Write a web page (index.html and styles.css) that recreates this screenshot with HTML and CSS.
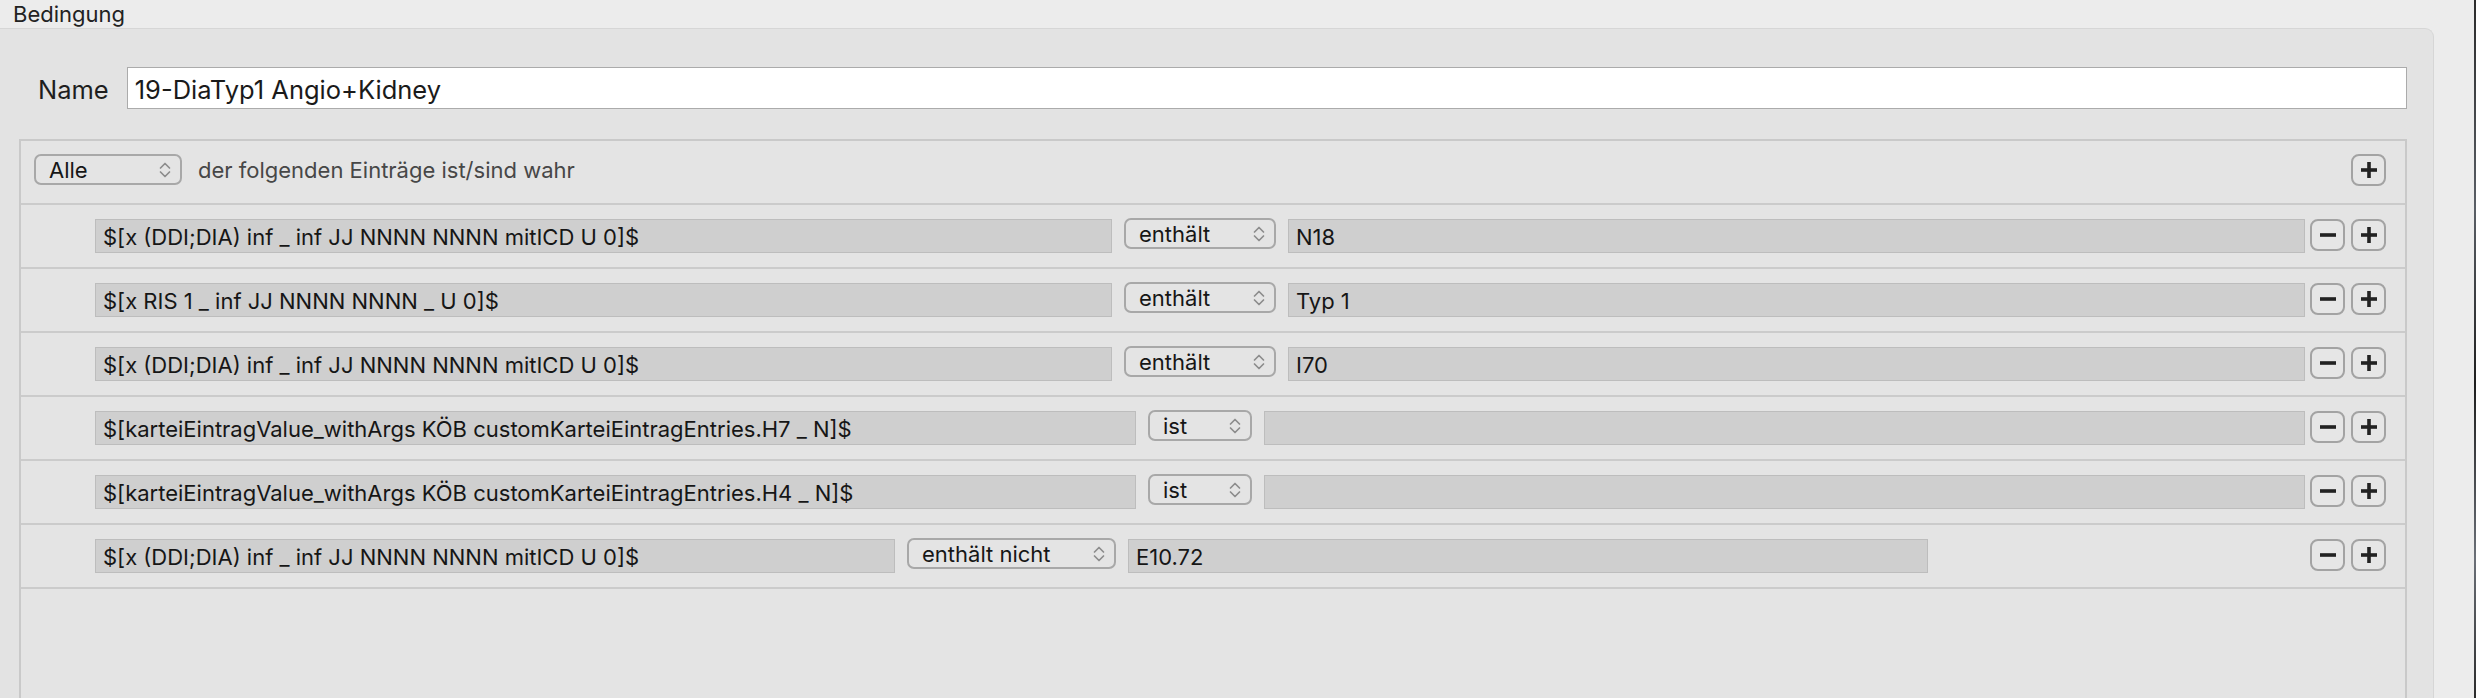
FILE: index.html
```html
<!DOCTYPE html>
<html lang="de">
<head>
  <meta charset="UTF-8" />
  <title>Bedingung</title>
  <link rel="stylesheet" href="styles.css">
</head>
<body>
  <div class="window">
    <div class="main">
      <div class="titlebar">Bedingung</div>

      <div class="panel">
        <div class="name-row">
          <label class="name-label">Name</label>
          <div class="name-input">19-DiaTyp1 Angio+Kidney</div>
        </div>

        <div class="rules">
          <div class="rules-head">
            <div class="popup popup-all">
              <span>Alle</span>
              <svg class="chev" width="14" height="20" viewBox="0 0 14 20"><polyline points="2.5,8 7,3.5 11.5,8" /><polyline points="2.5,12 7,16.5 11.5,12" /></svg>
            </div>
            <span class="head-text">der folgenden Einträge ist/sind wahr</span>
            <div class="btns">
              <button class="btn"><svg width="18" height="18" viewBox="0 0 18 18"><rect x="1" y="7.2" width="16" height="3.6" /><rect x="7.2" y="1" width="3.6" height="16" /></svg></button>
            </div>
          </div>

          <div class="rule">
            <div class="cond">
              <div class="field">$[x (DDI;DIA) inf _ inf JJ NNNN NNNN mitICD U 0]$</div>
              <div class="popup op-contains"><span>enthält</span><svg class="chev" width="14" height="20" viewBox="0 0 14 20"><polyline points="2.5,8 7,3.5 11.5,8" /><polyline points="2.5,12 7,16.5 11.5,12" /></svg></div>
              <div class="field">N18</div>
            </div>
            <div class="btns">
              <button class="btn"><svg width="18" height="18" viewBox="0 0 18 18"><rect x="1" y="7.2" width="16" height="3.6" /></svg></button>
              <button class="btn"><svg width="18" height="18" viewBox="0 0 18 18"><rect x="1" y="7.2" width="16" height="3.6" /><rect x="7.2" y="1" width="3.6" height="16" /></svg></button>
            </div>
          </div>

          <div class="rule">
            <div class="cond">
              <div class="field">$[x RIS 1 _ inf JJ NNNN NNNN _ U 0]$</div>
              <div class="popup op-contains"><span>enthält</span><svg class="chev" width="14" height="20" viewBox="0 0 14 20"><polyline points="2.5,8 7,3.5 11.5,8" /><polyline points="2.5,12 7,16.5 11.5,12" /></svg></div>
              <div class="field">Typ 1</div>
            </div>
            <div class="btns">
              <button class="btn"><svg width="18" height="18" viewBox="0 0 18 18"><rect x="1" y="7.2" width="16" height="3.6" /></svg></button>
              <button class="btn"><svg width="18" height="18" viewBox="0 0 18 18"><rect x="1" y="7.2" width="16" height="3.6" /><rect x="7.2" y="1" width="3.6" height="16" /></svg></button>
            </div>
          </div>

          <div class="rule">
            <div class="cond">
              <div class="field">$[x (DDI;DIA) inf _ inf JJ NNNN NNNN mitICD U 0]$</div>
              <div class="popup op-contains"><span>enthält</span><svg class="chev" width="14" height="20" viewBox="0 0 14 20"><polyline points="2.5,8 7,3.5 11.5,8" /><polyline points="2.5,12 7,16.5 11.5,12" /></svg></div>
              <div class="field">I70</div>
            </div>
            <div class="btns">
              <button class="btn"><svg width="18" height="18" viewBox="0 0 18 18"><rect x="1" y="7.2" width="16" height="3.6" /></svg></button>
              <button class="btn"><svg width="18" height="18" viewBox="0 0 18 18"><rect x="1" y="7.2" width="16" height="3.6" /><rect x="7.2" y="1" width="3.6" height="16" /></svg></button>
            </div>
          </div>

          <div class="rule">
            <div class="cond">
              <div class="field">$[karteiEintragValue_withArgs KÖB customKarteiEintragEntries.H7 _ N]$</div>
              <div class="popup op-is"><span>ist</span><svg class="chev" width="14" height="20" viewBox="0 0 14 20"><polyline points="2.5,8 7,3.5 11.5,8" /><polyline points="2.5,12 7,16.5 11.5,12" /></svg></div>
              <div class="field"></div>
            </div>
            <div class="btns">
              <button class="btn"><svg width="18" height="18" viewBox="0 0 18 18"><rect x="1" y="7.2" width="16" height="3.6" /></svg></button>
              <button class="btn"><svg width="18" height="18" viewBox="0 0 18 18"><rect x="1" y="7.2" width="16" height="3.6" /><rect x="7.2" y="1" width="3.6" height="16" /></svg></button>
            </div>
          </div>

          <div class="rule">
            <div class="cond">
              <div class="field">$[karteiEintragValue_withArgs KÖB customKarteiEintragEntries.H4 _ N]$</div>
              <div class="popup op-is"><span>ist</span><svg class="chev" width="14" height="20" viewBox="0 0 14 20"><polyline points="2.5,8 7,3.5 11.5,8" /><polyline points="2.5,12 7,16.5 11.5,12" /></svg></div>
              <div class="field"></div>
            </div>
            <div class="btns">
              <button class="btn"><svg width="18" height="18" viewBox="0 0 18 18"><rect x="1" y="7.2" width="16" height="3.6" /></svg></button>
              <button class="btn"><svg width="18" height="18" viewBox="0 0 18 18"><rect x="1" y="7.2" width="16" height="3.6" /><rect x="7.2" y="1" width="3.6" height="16" /></svg></button>
            </div>
          </div>

          <div class="rule">
            <div class="cond cond-short">
              <div class="field">$[x (DDI;DIA) inf _ inf JJ NNNN NNNN mitICD U 0]$</div>
              <div class="popup op-not"><span>enthält nicht</span><svg class="chev" width="14" height="20" viewBox="0 0 14 20"><polyline points="2.5,8 7,3.5 11.5,8" /><polyline points="2.5,12 7,16.5 11.5,12" /></svg></div>
              <div class="field">E10.72</div>
            </div>
            <div class="btns">
              <button class="btn"><svg width="18" height="18" viewBox="0 0 18 18"><rect x="1" y="7.2" width="16" height="3.6" /></svg></button>
              <button class="btn"><svg width="18" height="18" viewBox="0 0 18 18"><rect x="1" y="7.2" width="16" height="3.6" /><rect x="7.2" y="1" width="3.6" height="16" /></svg></button>
            </div>
          </div>
        </div>
      </div>
    </div>
    <div class="edge"></div>
  </div>
</body>
</html>
```

FILE: styles.css
```css
* {
  box-sizing: border-box;
}

body {
  margin: 0;
  width: 2476px;
  height: 698px;
  overflow: hidden;
  background-color: #ececec;
  font-family: Inter, "Liberation Sans", sans-serif;
  color: #1e1e1e;
}

.window {
  display: flex;
  height: 698px;
}

.main {
  flex: 1;
  display: flex;
  flex-direction: column;
}

.edge {
  width: 2px;
  background: linear-gradient(#2b2b2b, #5a5f66 30%, #1e1e1e 55%, #6b7078 80%, #2b2b2b);
}

.titlebar {
  height: 28px;
  line-height: 28px;
  padding-left: 13px;
  font-size: 22px;
  color: #222;
}

.panel {
  flex: 1;
  width: 2434px;
  display: flex;
  flex-direction: column;
  padding: 38px 26px 0 0;
  background-color: #e3e3e3;
  border-top: 1px solid #d6d6d6;
  border-right: 1px solid #d6d6d6;
  border-top-right-radius: 9px;
}

/* name line */
.name-row {
  display: flex;
  align-items: center;
  gap: 18px;
  padding-left: 38px;
}

.name-label {
  font-size: 25.5px;
  color: #1e1e1e;
  padding-top: 2px;
}

.name-input {
  flex: 1;
  height: 42px;
  line-height: 40px;
  padding: 2px 0 0 7px;
  font-size: 25.5px;
  color: #1a1a1a;
  background-color: #fff;
  border: 1px solid #ababab;
}

/* rules box */
.rules {
  flex: 1;
  margin: 30px 0 0 19px;
  border: 2px solid #c9c9c9;
  border-bottom: none;
  background-color: #e4e4e4;
}

.rules-head {
  display: flex;
  align-items: flex-start;
  height: 64px;
  padding: 13px 19px 0 13px;
  border-bottom: 2px solid #cbcbcb;
}

.head-text {
  margin-left: 16px;
  height: 31px;
  line-height: 33px;
  font-size: 22px;
  color: #474747;
}

.rule {
  display: flex;
  align-items: flex-start;
  height: 64px;
  padding: 14px 19px 0 74px;
  border-bottom: 2px solid #cbcbcb;
}

.cond {
  flex: 1;
  display: grid;
  grid-template-columns: 1fr auto 1fr;
  gap: 12px;
  margin-right: 5px;
}

.cond-short {
  flex: none;
  width: 1833px;
}

.field {
  height: 34px;
  line-height: 34px;
  padding-left: 7px;
  font-size: 22px;
  color: #161616;
  white-space: nowrap;
  overflow: hidden;
  background-color: #cfcfcf;
  border: 1px solid #bdbdbd;
}

/* popup buttons */
.popup {
  display: flex;
  align-items: center;
  justify-content: space-between;
  height: 31px;
  margin-top: -1px;
  padding: 1px 8px 0 13px;
  font-size: 22px;
  color: #161616;
  border: 2px solid #a8a8a8;
  border-radius: 7px;
}

.popup-all {
  width: 148px;
  margin-top: 0;
}

.op-contains {
  width: 152px;
}

.op-is {
  width: 104px;
}

.op-not {
  width: 209px;
}

.chev {
  margin-top: -1px;
}

.chev polyline {
  fill: none;
  stroke: #8c8c8c;
  stroke-width: 1.7;
  stroke-linecap: round;
  stroke-linejoin: round;
}

/* minus / plus */
.btns {
  display: flex;
  gap: 6px;
  margin-left: auto;
}

.btn {
  width: 35px;
  height: 32px;
  padding: 0;
  display: flex;
  align-items: center;
  justify-content: center;
  background-color: #e6e6e6;
  border: 2px solid #a3a3a3;
  border-radius: 8px;
}

.btn svg rect {
  fill: #222;
}
```
